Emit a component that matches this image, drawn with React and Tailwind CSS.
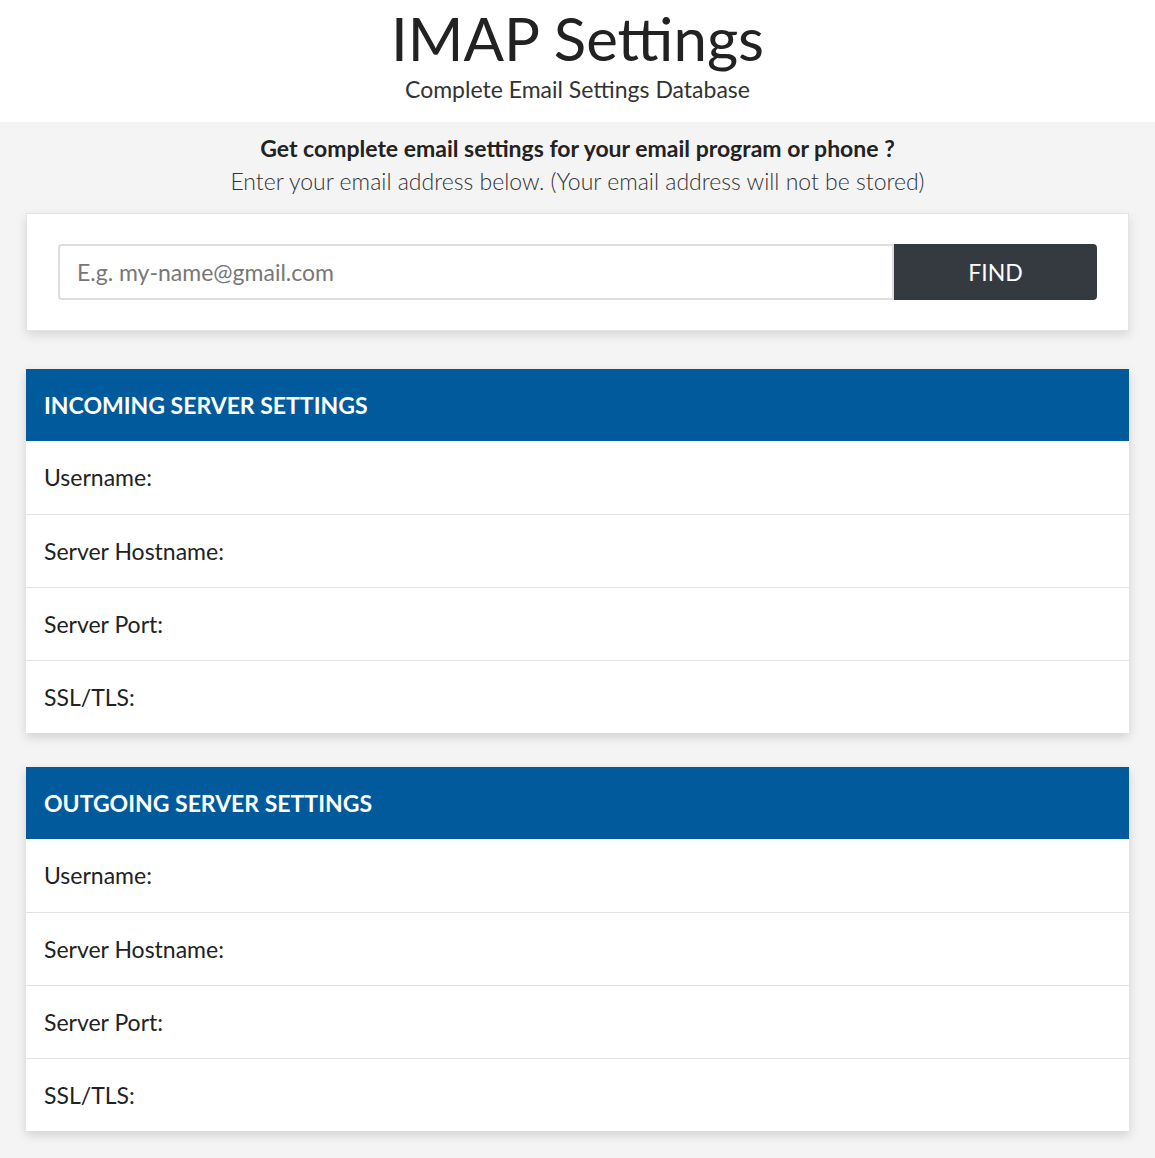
export default function App() {
  const font = { fontFamily: "Lato, 'Open Sans', sans-serif" };
  const Section = ({ title }) => (
    <div className="bg-white shadow-[0_4px_10px_rgba(0,0,0,0.15)]">
      <div className="bg-[#005a9c] h-[72px] flex items-center px-[18px] text-white text-[23px] font-bold">{title}</div>
      {["Username:", "Server Hostname:", "Server Port:", "SSL/TLS:"].map((l, i) => (
        <div key={l} className={`h-[73px] flex items-center px-[18px] text-[23px] text-[#222] ${i ? "border-t border-[#e3e3e3]" : ""}`}>{l}</div>
      ))}
    </div>
  );
  return (
    <div style={font} className="w-[1155px] min-h-[1158px] bg-[#f4f4f4]">
      <div className="bg-white h-[122px] flex flex-col items-center pt-[2px]">
        <div className="text-[60px] leading-[72px] text-[#222]">IMAP Settings</div>
        <div className="text-[23px] leading-[30px] text-[#333] mt-[0px]">Complete Email Settings Database</div>
      </div>
      <div className="px-[26px] pb-[28px]">
        <div className="text-center pt-[10px]">
          <div className="text-[23px] leading-[32px] font-bold text-[#222]">Get complete email settings for your email program or phone ?</div>
          <div className="text-[23px] leading-[34px] text-[#333] font-light">Enter your email address below. (Your email address will not be stored)</div>
        </div>
        <div className="mt-[15px] bg-white border border-[#e3e3e3] shadow-[0_4px_10px_rgba(0,0,0,0.12)] h-[118px] flex items-center px-[31px]">
          <div className="flex w-full h-[56px]">
            <input placeholder="E.g. my-name@gmail.com" style={font} className="flex-1 border-2 border-[#ddd] rounded-l px-[17px] text-[23px] placeholder-[#777] outline-none" />
            <button style={font} className="w-[203px] bg-[#343a40] text-white text-[23px] rounded-r">FIND</button>
          </div>
        </div>
        <div className="mt-[38px]"><Section title="INCOMING SERVER SETTINGS" /></div>
        <div className="mt-[34px]"><Section title="OUTGOING SERVER SETTINGS" /></div>
      </div>
    </div>
  );
}
